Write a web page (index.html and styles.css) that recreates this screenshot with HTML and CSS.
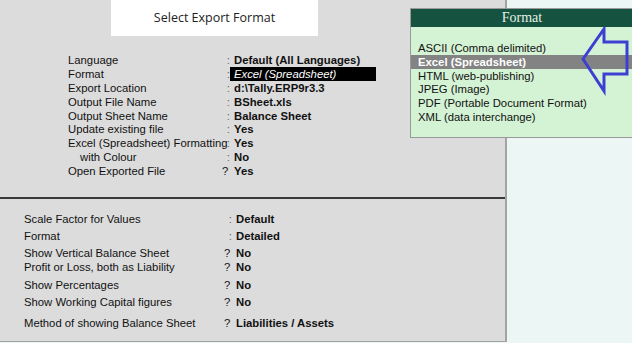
FILE: index.html
```html
<!DOCTYPE html>
<html lang="en">
<head>
  <meta charset="UTF-8" />
  <title>Select Export Format</title>
  <link rel="stylesheet" href="styles.css">
</head>
<body>

  <div class="screen">
    <div class="panel">
      <div class="title">Select Export Format</div>

      <div class="export-rows">
        <span class="label">Language</span><span class="mark">:</span><span class="value">Default (All Languages)</span>
        <span class="label">Format</span><span class="mark">:</span><span class="value selected">Excel (Spreadsheet)</span>
        <span class="label">Export Location</span><span class="mark">:</span><span class="value">d:\Tally.ERP9r3.3</span>
        <span class="label">Output File Name</span><span class="mark">:</span><span class="value">BSheet.xls</span>
        <span class="label">Output Sheet Name</span><span class="mark">:</span><span class="value">Balance Sheet</span>
        <span class="label">Update existing file</span><span class="mark">:</span><span class="value">Yes</span>
        <span class="label">Excel (Spreadsheet) Formatting</span><span class="mark">:</span><span class="value">Yes</span>
        <span class="label sub">with Colour</span><span class="mark">:</span><span class="value">No</span>
        <span class="label">Open Exported File</span><span class="mark q">?</span><span class="value">Yes</span>
      </div>

      <div class="report-rows">
        <div class="row"><span class="label">Scale Factor for Values</span><span class="mark">:</span><span class="value">Default</span></div>
        <div class="row"><span class="label">Format</span><span class="mark">:</span><span class="value">Detailed</span></div>
        <div class="row"><span class="label">Show Vertical Balance Sheet</span><span class="mark q">?</span><span class="value">No</span></div>
        <div class="row tight"><span class="label">Profit or Loss, both as Liability</span><span class="mark q">?</span><span class="value">No</span></div>
        <div class="row loose"><span class="label">Show Percentages</span><span class="mark q">?</span><span class="value">No</span></div>
        <div class="row"><span class="label">Show Working Capital figures</span><span class="mark q">?</span><span class="value">No</span></div>
        <div class="row wide"><span class="label">Method of showing Balance Sheet</span><span class="mark q">?</span><span class="value">Liabilities / Assets</span></div>
      </div>
    </div>
    <div class="side"></div>

    <div class="popup">
      <div class="popup-head">Format</div>
      <ul class="popup-list">
        <li>ASCII (Comma delimited)</li>
        <li class="current">Excel (Spreadsheet)</li>
        <li>HTML (web-publishing)</li>
        <li>JPEG (Image)</li>
        <li>PDF (Portable Document Format)</li>
        <li>XML (data interchange)</li>
      </ul>
    </div>

    <svg class="arrow" width="52" height="70" viewBox="0 0 52 70">
      <polygon points="3,32 24,2 24,15 47,15 47,47 24,47 24,64" fill="none" stroke="#3c40d2" stroke-width="3" stroke-linejoin="miter" />
    </svg>
  </div>

</body>
</html>
```

FILE: styles.css
```css
body {
  margin: 0;
  font-family: 'Liberation Sans', Arial, sans-serif;
  font-size: 11.3px;
  color: #111;
  background: #ecf6f4;
}

.screen {
  position: relative;
  display: flex;
  width: 632px;
  height: 343px;
  overflow: hidden;
}

.panel {
  width: 505px;
  height: 341px;
  background: #dcdcdc;
  border-right: 2px solid #a3a3a3;
  border-bottom: 1px solid #a3a3a3;
}

.side {
  flex: 1;
  background: #ecf6f4;
}

.title {
  margin-left: 111px;
  width: 207px;
  height: 36px;
  background: #fff;
  font-family: 'Open Sans', sans-serif;
  font-size: 12.5px;
  line-height: 36px;
  text-align: center;
  color: #222;
}

.label {
  white-space: nowrap;
}

.export-rows {
  display: grid;
  grid-template-columns: 154px 12px auto;
  grid-auto-rows: 13.9px;
  align-content: start;
  line-height: 14px;
  padding: 17px 0 0 68px;
  height: 144px;
  border-bottom: 2px solid #3a3a3a;
}

.export-rows .label.sub {
  padding-left: 12px;
}

.mark {
  color: #666;
  text-align: right;
  padding-right: 4px;
}

.mark.q {
  color: #111;
  padding-right: 6px;
}

.value {
  font-weight: bold;
  white-space: nowrap;
}

.value.selected {
  justify-self: start;
  width: 142px;
  margin-left: -4px;
  padding-left: 4px;
  background: #000;
  color: #fff;
  font-weight: normal;
  font-style: italic;
}

.report-rows {
  padding: 12px 0 0 24px;
}

.report-rows .row {
  display: grid;
  grid-template-columns: 200px 12px auto;
  height: 17px;
  line-height: 17px;
}

.report-rows .row.tight {
  margin-top: -3px;
}

.report-rows .row.loose {
  margin-top: 1px;
}

.report-rows .row.wide {
  margin-top: 4px;
}

.popup {
  position: absolute;
  left: 410px;
  top: 8px;
  width: 230px;
  height: 128px;
  background: #d4f2d4;
  border: 1px solid #9a9a9a;
}

.popup-head {
  height: 18px;
  line-height: 18px;
  background: #15523f;
  color: #e6f0e6;
  font-family: 'Liberation Serif', serif;
  font-size: 14px;
  text-align: center;
  padding-right: 8px;
}

.popup-list {
  list-style: none;
  margin: 0;
  padding: 14px 0 0 0;
}

.popup-list li {
  height: 13.8px;
  line-height: 14px;
  padding-left: 7px;
}

.popup-list li.current {
  background: #838383;
  color: #fff;
  font-weight: bold;
}

.arrow {
  position: absolute;
  left: 580px;
  top: 27px;
}
```
